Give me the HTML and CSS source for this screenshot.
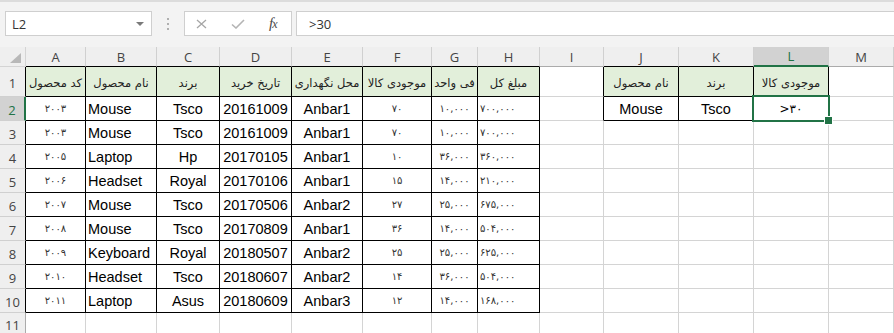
FILE: index.html
```html
<!DOCTYPE html>
<html lang="fa">
<head>
  <meta charset="UTF-8">
  <title>Book1 - Excel</title>
  <link rel="stylesheet" href="styles.css">
</head>
<body>
  <div class="bar">
    <div class="namebox">
      <span class="ref">L2</span>
      <span class="caret"></span>
    </div>
    <div class="grip"><i></i><i></i><i></i></div>
    <div class="fxbox">
      <svg class="ico" width="11" height="10" viewBox="0 0 11 10"><path d="M1 1L10 9M10 1L1 9" stroke="#a6a6a6" stroke-width="1.3" fill="none"/></svg>
      <svg class="ico" width="14" height="10" viewBox="0 0 14 10"><path d="M1 5.5L5 9L13 1" stroke="#b4b4b4" stroke-width="1.6" fill="none"/></svg>
      <span class="fx">f<span class="fx-x">x</span></span>
    </div>
    <div class="formula">&gt;30</div>
  </div>

  <table class="sheet">
    <colgroup>
      <col style="width:26px"><col style="width:60px"><col style="width:71px"><col style="width:63px">
      <col style="width:72px"><col style="width:71px"><col style="width:69px"><col style="width:46px">
      <col style="width:62px"><col style="width:64px"><col style="width:75px"><col style="width:75px">
      <col style="width:75px"><col style="width:65px"><col>
    </colgroup>
    <tr class="hdr">
      <th class="corner"><span class="tri"></span></th>
      <th class="col edge">A</th><th class="col edge">B</th><th class="col edge">C</th><th class="col edge">D</th>
      <th class="col edge">E</th><th class="col edge">F</th><th class="col edge">G</th><th class="col edge">H</th>
      <th class="col">I</th><th class="col edge">J</th><th class="col edge">K</th><th class="col edge on">L</th>
      <th class="col">M</th><th class="col"></th>
    </tr>
    <tr class="r1">
      <th class="row edge">1</th>
      <td class="t head fa">کد محصول</td><td class="t head fa">نام محصول</td><td class="t head fa">برند</td>
      <td class="t head fa">تاریخ خرید</td><td class="t head fa">محل نگهداری</td><td class="t head fa">موجودی کالا</td>
      <td class="t head fa">فی واحد</td><td class="t head fa">مبلغ کل</td>
      <td class="lt"></td>
      <td class="t head fa">نام محصول</td><td class="t head fa">برند</td><td class="t head fa">موجودی کالا</td>
      <td></td><td></td>
    </tr>
    <tr>
      <th class="row edge on">2</th>
      <td class="t num">۲۰۰۳</td><td class="t l">Mouse</td><td class="t">Tsco</td><td class="t">20161009</td>
      <td class="t">Anbar1</td><td class="t num">۷۰</td><td class="t num">۱۰,۰۰۰</td><td class="t num l">۷۰۰,۰۰۰</td>
      <td class="lt"></td>
      <td class="t">Mouse</td><td class="t">Tsco</td><td class="t num big sel">&gt;۳۰</td>
      <td></td><td></td>
    </tr>
    <tr>
      <th class="row edge">3</th>
      <td class="t num">۲۰۰۳</td><td class="t l">Mouse</td><td class="t">Tsco</td><td class="t">20161009</td>
      <td class="t">Anbar1</td><td class="t num">۷۰</td><td class="t num">۱۰,۰۰۰</td><td class="t num l">۷۰۰,۰۰۰</td>
      <td></td><td></td><td></td><td></td><td></td><td></td>
    </tr>
    <tr>
      <th class="row edge">4</th>
      <td class="t num">۲۰۰۵</td><td class="t l">Laptop</td><td class="t">Hp</td><td class="t">20170105</td>
      <td class="t">Anbar1</td><td class="t num">۱۰</td><td class="t num">۳۶,۰۰۰</td><td class="t num l">۳۶۰,۰۰۰</td>
      <td></td><td></td><td></td><td></td><td></td><td></td>
    </tr>
    <tr>
      <th class="row edge">5</th>
      <td class="t num">۲۰۰۶</td><td class="t l">Headset</td><td class="t">Royal</td><td class="t">20170106</td>
      <td class="t">Anbar1</td><td class="t num">۱۵</td><td class="t num">۱۴,۰۰۰</td><td class="t num l">۲۱۰,۰۰۰</td>
      <td></td><td></td><td></td><td></td><td></td><td></td>
    </tr>
    <tr>
      <th class="row edge">6</th>
      <td class="t num">۲۰۰۷</td><td class="t l">Mouse</td><td class="t">Tsco</td><td class="t">20170506</td>
      <td class="t">Anbar2</td><td class="t num">۲۷</td><td class="t num">۲۵,۰۰۰</td><td class="t num l">۶۷۵,۰۰۰</td>
      <td></td><td></td><td></td><td></td><td></td><td></td>
    </tr>
    <tr>
      <th class="row edge">7</th>
      <td class="t num">۲۰۰۸</td><td class="t l">Mouse</td><td class="t">Tsco</td><td class="t">20170809</td>
      <td class="t">Anbar1</td><td class="t num">۳۶</td><td class="t num">۱۴,۰۰۰</td><td class="t num l">۵۰۴,۰۰۰</td>
      <td></td><td></td><td></td><td></td><td></td><td></td>
    </tr>
    <tr>
      <th class="row edge">8</th>
      <td class="t num">۲۰۰۹</td><td class="t l">Keyboard</td><td class="t">Royal</td><td class="t">20180507</td>
      <td class="t">Anbar2</td><td class="t num">۲۵</td><td class="t num">۲۵,۰۰۰</td><td class="t num l">۶۲۵,۰۰۰</td>
      <td></td><td></td><td></td><td></td><td></td><td></td>
    </tr>
    <tr>
      <th class="row edge">9</th>
      <td class="t num">۲۰۱۰</td><td class="t l">Headset</td><td class="t">Tsco</td><td class="t">20180607</td>
      <td class="t">Anbar2</td><td class="t num">۱۴</td><td class="t num">۳۶,۰۰۰</td><td class="t num l">۵۰۴,۰۰۰</td>
      <td></td><td></td><td></td><td></td><td></td><td></td>
    </tr>
    <tr>
      <th class="row edge">10</th>
      <td class="t num">۲۰۱۱</td><td class="t l">Laptop</td><td class="t">Asus</td><td class="t">20180609</td>
      <td class="t">Anbar3</td><td class="t num">۱۲</td><td class="t num">۱۴,۰۰۰</td><td class="t num l">۱۶۸,۰۰۰</td>
      <td></td><td></td><td></td><td></td><td></td><td></td>
    </tr>
    <tr class="r11">
      <th class="row">11</th>
      <td></td><td></td><td></td><td></td><td></td><td></td><td></td>
      <td></td><td></td><td></td><td></td><td></td><td></td><td></td>
    </tr>
  </table>
</body>
</html>
```

FILE: styles.css
```css
* {
  margin: 0;
  padding: 0;
  box-sizing: border-box;
}
body {
  width: 894px;
  height: 333px;
  overflow: hidden;
  background: #fff;
  font-family: "Liberation Sans", Arial, sans-serif;
}

/* formula bar */
.bar {
  display: flex;
  align-items: flex-start;
  height: 47px;
  padding: 9px 0 0 5px;
  background: #f3f3f3;
  border-top: 2px solid #dcdcdc;
}
.namebox {
  width: 147px;
  height: 25px;
  background: #fff;
  border: 1px solid #cfcfcf;
  display: flex;
  align-items: center;
  justify-content: space-between;
  padding: 0 7px 0 6px;
  font-family: "Open Sans", sans-serif;
  font-size: 13px;
  color: #333;
}
.caret {
  width: 0;
  height: 0;
  border-left: 4px solid transparent;
  border-right: 4px solid transparent;
  border-top: 4px solid #7a7a7a;
}
.grip {
  width: 32px;
  height: 25px;
  display: flex;
  flex-direction: column;
  align-items: center;
  justify-content: center;
  gap: 3px;
}
.grip i {
  width: 2px;
  height: 2px;
  background: #b0b0b0;
}
.fxbox {
  width: 108px;
  height: 25px;
  background: #fff;
  border: 1px solid #cfcfcf;
  display: flex;
  align-items: center;
  gap: 24px;
  padding-left: 11px;
}
.fx {
  font-family: "Liberation Serif", serif;
  font-style: italic;
  font-size: 15px;
  color: #4a4a4a;
  letter-spacing: -1px;
}
.fx-x {
  font-size: 12px;
}
.formula {
  flex: 1;
  height: 25px;
  margin-left: 4px;
  background: #fff;
  border: 1px solid #cfcfcf;
  border-right: 0;
  padding-left: 12px;
  display: flex;
  align-items: center;
  font-family: "Open Sans", sans-serif;
  font-size: 13px;
  color: #333;
}

/* grid */
.sheet {
  width: 894px;
  border-collapse: separate;
  border-spacing: 0;
  table-layout: fixed;
}
.sheet th,
.sheet td {
  padding: 0;
  border-right: 1px solid #d4d4d4;
  border-bottom: 1px solid #d4d4d4;
  white-space: nowrap;
  overflow: hidden;
  text-align: center;
  font-weight: normal;
  font-size: 14.5px;
  color: #000;
}
.sheet tr { height: 24px; }
.sheet tr.hdr { height: 20px; }
.sheet tr.r1 { height: 30px; }
.sheet tr.r11 { height: 20px; }

.sheet th {
  background: #efefef;
  font-family: "Open Sans", sans-serif;
  font-size: 13px;
  color: #444;
}
.sheet th.col {
  border-right-color: #d0d0d0;
  border-bottom-color: #ababab;
}
.sheet th.row {
  border-right-color: #ababab;
  border-bottom-color: #d0d0d0;
  padding-top: 3px;
}
.corner {
  position: relative;
}
.tri {
  position: absolute;
  right: 4px;
  bottom: 3px;
  width: 0;
  height: 0;
  border-left: 11px solid transparent;
  border-bottom: 10px solid #b8b8b8;
}

/* table borders */
.sheet td.t {
  border-right-color: #000;
  border-bottom-color: #000;
}
.sheet td.lt { border-right-color: #000; }
.sheet th.col.edge { border-bottom-color: #000; }
.sheet th.row.edge { border-right-color: #000; }

.sheet td.head {
  background: #e2efda;
}
.fa {
  font-family: "DejaVu Sans", sans-serif;
  font-size: 11.5px !important;
  color: #222 !important;
  padding-top: 2px !important;
}
.num {
  font-family: "DejaVu Sans", sans-serif;
  font-size: 10px !important;
  color: #333 !important;
}
.num.big {
  font-size: 12px !important;
  color: #000 !important;
}
.sheet td.l {
  text-align: left;
  padding-left: 2px;
}

/* selection */
.sheet th.col.on {
  background: #d2d2d2;
  color: #217346;
  border-bottom: 2px solid #217346;
}
.sheet th.row.on {
  background: #d2d2d2;
  color: #217346;
  border-right: 2px solid #217346;
}
.sheet td.sel {
  position: relative;
  overflow: visible;
}
.sel::before {
  content: "";
  position: absolute;
  left: -2px;
  top: -2px;
  right: -2px;
  bottom: -2px;
  border: 2px solid #217346;
}
.sel::after {
  content: "";
  position: absolute;
  right: -5px;
  bottom: -5px;
  width: 7px;
  height: 7px;
  background: #217346;
  border: 1px solid #fff;
}
```
